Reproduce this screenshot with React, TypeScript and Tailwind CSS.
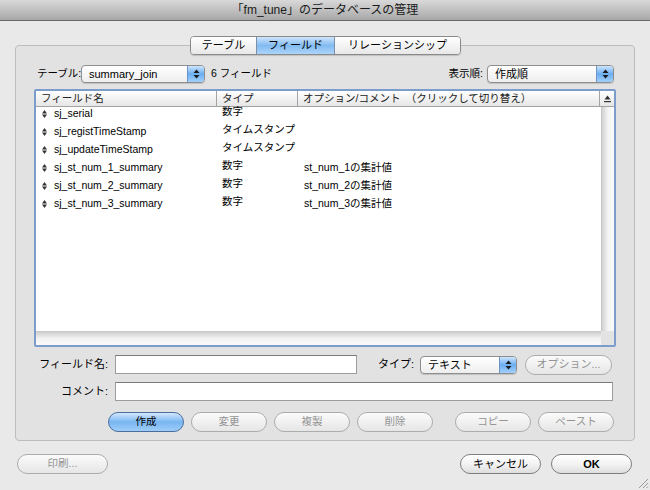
import React from 'react';

const font = { fontFamily: '"Liberation Sans", "Noto Sans CJK JP", sans-serif' };

const Arrows = () => (
  <svg width="7" height="10" viewBox="0 0 7 10">
    <path d="M3.5 0.5 L6.5 4 L0.5 4 Z" fill="#1a1a1a" />
    <path d="M3.5 9.5 L6.5 6 L0.5 6 Z" fill="#1a1a1a" />
  </svg>
);

const RowIcon = () => (
  <svg width="5" height="8" viewBox="0 0 5 8">
    <path d="M2.5 0 L5 3.4 L0 3.4 Z" fill="#333" />
    <path d="M2.5 8 L5 4.6 L0 4.6 Z" fill="#333" />
  </svg>
);

const Popup = ({ label, className }: { label: string; className: string }) => (
  <div className={`flex h-[18px] rounded-[4px] border border-[#8e8e8e] bg-gradient-to-b from-white to-[#eeeeee] shadow-[0_1px_1px_rgba(0,0,0,0.15)] ${className}`}>
    <div className="flex-1 pl-[7px] text-[11px] leading-[16px] text-black">{label}</div>
    <div className="flex w-[17px] items-center justify-center rounded-r-[3px] border-l border-[#6f93c4] bg-gradient-to-b from-[#cde5fd] via-[#6aaef2] to-[#a3d0fb]">
      <Arrows />
    </div>
  </div>
);

const Btn = ({ label, className, disabled, primary }: { label: string; className: string; disabled?: boolean; primary?: boolean }) => (
  <div
    className={`flex h-[20px] items-center justify-center rounded-full border ${
      primary
        ? 'border-[#4b6e9e] bg-gradient-to-b from-[#d4e8fc] via-[#78b6f1] to-[#9fcdf8] text-black'
        : disabled
        ? 'border-[#acacac] bg-gradient-to-b from-[#fbfbfb] to-[#e6e6e6] text-[#949494]'
        : 'border-[#7e7e7e] bg-gradient-to-b from-white via-[#f3f3f3] to-[#dedede] text-black'
    } ${className}`}
  >
    {label}
  </div>
);

const rows = [
  { name: 'sj_serial', type: '数字', opt: '' },
  { name: 'sj_registTimeStamp', type: 'タイムスタンプ', opt: '' },
  { name: 'sj_updateTimeStamp', type: 'タイムスタンプ', opt: '' },
  { name: 'sj_st_num_1_summary', type: '数字', opt: 'st_num_1の集計値' },
  { name: 'sj_st_num_2_summary', type: '数字', opt: 'st_num_2の集計値' },
  { name: 'sj_st_num_3_summary', type: '数字', opt: 'st_num_3の集計値' },
];

export default function App() {
  return (
    <div style={font} className="relative flex h-[490px] w-[650px] flex-col overflow-hidden whitespace-nowrap bg-[#e9e9e9] text-[10.5px] text-black">
      {/* title bar */}
      <div className="flex h-[21px] items-center justify-center border-b border-[#6a6a6a] bg-gradient-to-b from-[#d9d9d9] to-[#a8a8a8] text-[12px] text-[#1a1a1a]">
        「fm_tune」のデータベースの管理
      </div>

      {/* tabs */}
      <div className="relative z-10 mt-[15px] flex justify-center">
        <div className="ml-[1px] flex h-[19px] overflow-hidden rounded-[4px] border border-[#8a8a8a] text-[11px] leading-[17px] shadow-[0_1px_1px_rgba(0,0,0,0.15)]">
          <div className="w-[65px] bg-gradient-to-b from-white to-[#e8e8e8] text-center">テーブル</div>
          <div className="w-[79px] border-x border-[#7d8fa8] bg-gradient-to-b from-[#cfe5fb] via-[#82bbf1] to-[#acd4f9] text-center">フィールド</div>
          <div className="w-[125px] bg-gradient-to-b from-white to-[#e8e8e8] text-center">リレーションシップ</div>
        </div>
      </div>

      {/* group panel */}
      <div className="mx-[15px] -mt-[10px] flex h-[396px] flex-col rounded-[4px] border border-[#bdbdbd] bg-[#e2e2e2] px-[18px] pt-[19px]">
        <div className="flex h-[18px] items-center">
          <span className="ml-[3px] w-[44px]">テーブル:</span>
          <Popup label="summary_join" className="w-[124px]" />
          <span className="ml-[6px]">6 フィールド</span>
          <span className="ml-auto mr-[4px]">表示順:</span>
          <Popup label="作成順" className="mr-[2px] w-[127px]" />
        </div>

        {/* list */}
        <div className="mt-[6px] flex h-[258px] flex-col rounded-[2px] border-2 border-[#7c9dcb] bg-white">
          <div className="flex h-[16px] border-b border-[#a3a3a3] bg-gradient-to-b from-white to-[#e6e6e6] leading-[15px] text-[#222]">
            <div className="w-[181px] border-r border-[#a3a3a3] pl-[5px]">フィールド名</div>
            <div className="w-[81px] border-r border-[#a3a3a3] pl-[5px]">タイプ</div>
            <div className="w-[302px] overflow-hidden border-r border-[#a3a3a3] pl-[5px]">オプション/コメント　（クリックして切り替え）</div>
            <div className="flex flex-1 items-center justify-center">
              <svg width="7" height="8" viewBox="0 0 7 8">
                <path d="M3.5 0.5 L6.5 4.5 L0.5 4.5 Z" fill="#333" />
                <rect x="0" y="6" width="7" height="1.2" fill="#333" />
              </svg>
            </div>
          </div>
          <div className="flex flex-1">
            <div className="-mt-[2px] flex-1">
              {rows.map((r) => (
                <div key={r.name} className="flex h-[18px] items-center">
                  <div className="flex w-[181px] items-center">
                    <span className="ml-[6px] mr-[7px] flex"><RowIcon /></span>
                    <span>{r.name}</span>
                  </div>
                  <div className="w-[81px] -translate-y-[2px] pl-[5px]">{r.type}</div>
                  <div className="pl-[6px]">{r.opt}</div>
                </div>
              ))}
            </div>
            <div className="w-[13px] border-l border-[#c8c8c8] bg-gradient-to-r from-[#d2d2d2] via-[#f4f4f4] to-[#fafafa]" />
          </div>
          <div className="flex h-[14px]">
            <div className="flex-1 border-t border-[#c8c8c8] bg-gradient-to-b from-[#cfcfcf] via-[#f2f2f2] to-[#fafafa]" />
            <div className="w-[13px] bg-[#e3e3e3]" />
          </div>
        </div>

        {/* field name row */}
        <div className="mt-[8px] flex h-[19px] items-center text-[11px]">
          <span className="w-[74px] text-right">フィールド名:</span>
          <div className="ml-[7px] h-[19px] w-[242px] border border-[#9c9c9c] border-t-[#7a7a7a] bg-white" />
          <span className="ml-[21px] w-[37px]">タイプ:</span>
          <Popup label="テキスト" className="ml-[5px] w-[97px]" />
          <Btn label="オプション..." disabled className="ml-[8px] w-[87px]" />
        </div>

        {/* comment row */}
        <div className="mt-[8px] flex h-[19px] items-center text-[11px]">
          <span className="w-[74px] text-right">コメント:</span>
          <div className="ml-[7px] h-[19px] flex-1 border border-[#9c9c9c] border-t-[#7a7a7a] bg-white" />
          <div className="w-[3px]" />
        </div>

        {/* action buttons */}
        <div className="mt-[11px] flex items-center">
          <Btn label="作成" primary className="ml-[74px] w-[76px]" />
          <Btn label="変更" disabled className="ml-[7px] w-[76px]" />
          <Btn label="複製" disabled className="ml-[7px] w-[76px]" />
          <Btn label="削除" disabled className="ml-[7px] w-[76px]" />
          <Btn label="コピー" disabled className="ml-[22px] w-[76px]" />
          <Btn label="ペースト" disabled className="ml-[7px] w-[76px]" />
        </div>
      </div>

      {/* bottom buttons */}
      <div className="mt-[13px] flex items-center px-[17px]">
        <Btn label="印刷..." disabled className="w-[91px]" />
        <Btn label="キャンセル" className="ml-auto w-[81px] text-[11px]" />
        <Btn label="OK" className="ml-[10px] mr-[1px] w-[81px] text-[11px] font-bold" />
      </div>

      {/* resize grip */}
      <svg className="absolute bottom-[1px] right-[1px]" width="12" height="12" viewBox="0 0 12 12">
        <path d="M11 2 L2 11 M11 6 L6 11 M11 9.5 L9.5 11" stroke="#9a9a9a" strokeWidth="1" />
      </svg>
    </div>
  );
}
